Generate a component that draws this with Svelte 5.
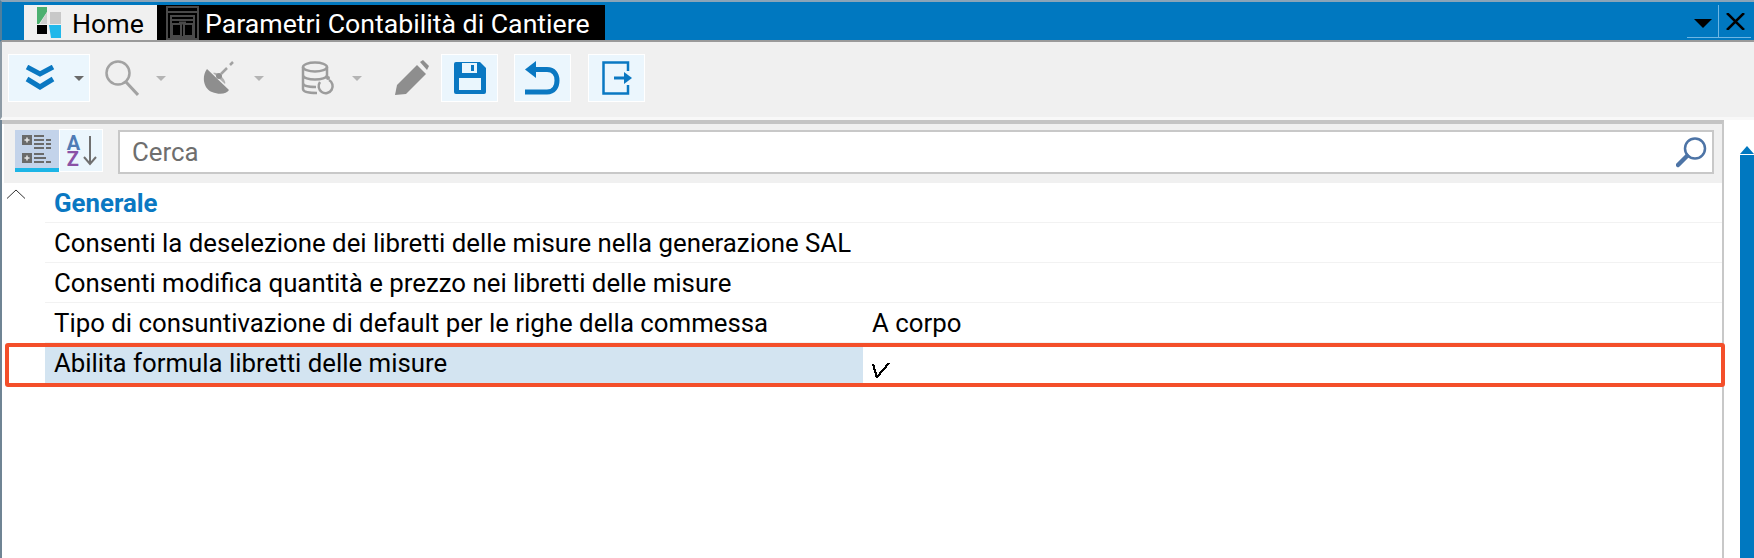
<script>
  const rows = [
    { label: 'Consenti la deselezione dei libretti delle misure nella generazione SAL', value: '' },
    { label: 'Consenti modifica quantità e prezzo nei libretti delle misure', value: '' },
    { label: 'Tipo di consuntivazione di default per le righe della commessa', value: 'A corpo' }
  ];
</script>

<div class="window">
  <header class="titlebar">
    <div class="tab home">
      <svg class="logo" width="24" height="31" viewBox="0 0 24 31">
        <path d="M0 0h10v5L2 17H0z" fill="#4cb070" />
        <path d="M10 5v12H3z" fill="#cfcfcf" />
        <rect x="13" y="5" width="11" height="12" fill="#c8c8c8" />
        <rect x="0" y="18" width="10" height="9" fill="#000" />
        <path d="M12 18h12v13H14z" fill="#22b8ea" />
      </svg>
      <span>Home</span>
    </div>
    <div class="tab active">
      <svg class="tabicon" width="33" height="34" viewBox="0 0 33 34" fill="none" stroke="#4a4a4a" stroke-width="2">
        <rect x="1" y="1" width="31" height="32" />
        <path d="M1 6h31" />
        <rect x="5" y="10" width="23" height="21" />
        <path d="M5 14h23" />
        <rect x="6" y="18" width="9" height="12" />
        <rect x="18" y="18" width="9" height="12" />
        <path d="M13 17h7" stroke-width="3" />
        <path d="M13 31h7" stroke-width="2" />
      </svg>
      <span>Parametri Contabilità di Cantiere</span>
    </div>
    <div class="winbtns">
      <div class="winbtn first"><span class="blacktri"></span></div>
      <div class="winbtn">
        <svg width="19" height="17" viewBox="0 0 19 17"><path d="M1 0l17 17M18 0L1 17" stroke="#000" stroke-width="2.500" /></svg>
      </div>
    </div>
  </header>

  <div class="toolbar">
    <button class="tool wide" aria-label="Espandi">
      <svg width="30" height="26" viewBox="0 0 30 26" fill="none" stroke="#0a78c2" stroke-width="5">
        <path d="M2 2l13 7 13-7M2 14l13 8 13-8" />
      </svg>
      <span class="tri dark"></span>
    </button>
    <div class="ghost g1">
      <svg width="34" height="36" viewBox="0 0 34 36" fill="none" stroke="#a2a2a2">
        <circle cx="13" cy="13" r="11.500" stroke-width="2.500" />
        <path d="M21 22l12 13" stroke-width="3" />
      </svg>
      <span class="tri"></span>
    </div>
    <div class="ghost g2">
      <svg width="34" height="34" viewBox="0 0 34 34" fill="none">
        <path d="M4 8c-6 8-3 20 5 23 7 3 15 2 17-2z" fill="#8e8e8e" />
        <path d="M10 12c2-1 5 0 8 3s5 6 4 8z" fill="#b0b0b0" />
        <circle cx="16" cy="15" r="3" fill="#8e8e8e" />
        <path d="M18 13l6-6M27 4l3-3" stroke="#a2a2a2" stroke-width="2.500" />
      </svg>
      <span class="tri"></span>
    </div>
    <div class="ghost g3">
      <svg width="35" height="34" viewBox="0 0 35 34" fill="none" stroke="#9c9c9c" stroke-width="2.500">
        <ellipse cx="14" cy="6" rx="12" ry="4.500" />
        <path d="M2 6v22c0 3 6 4 14 4M26 6v10M2 14c0 3 6 4.500 12 4.500s12-1.500 12-4.500M2 22c0 3 6 4 13 4" />
        <path d="M28 19a7 7 0 1 1-9 2" />
        <circle cx="27" cy="17" r="2" fill="#9c9c9c" stroke="none" />
      </svg>
      <span class="tri"></span>
    </div>
    <div class="ghost g4">
      <svg width="34" height="36" viewBox="0 0 34 36">
        <path d="M0 35l2-10L22 5l9 9-20 20z" fill="#8e8e8e" />
        <path d="M25 2l3-2 6 6-2 4z" fill="#8e8e8e" />
      </svg>
    </div>
    <button class="tool square s1" aria-label="Salva">
      <svg width="32" height="32" viewBox="0 0 32 32">
        <path d="M2 0h24l6 6v24a2 2 0 0 1-2 2H2a2 2 0 0 1-2-2V2a2 2 0 0 1 2-2z" fill="#0a78c2" />
        <rect x="8" y="1" width="15" height="10" fill="#eaf6fd" />
        <rect x="17" y="3" width="3" height="6" fill="#0a78c2" />
        <rect x="5" y="16" width="22" height="12" fill="#eaf6fd" />
      </svg>
    </button>
    <button class="tool square s2" aria-label="Annulla">
      <svg width="35" height="34" viewBox="0 0 35 34" fill="none">
        <path d="M11 0v17L0 8.500z" fill="#0a78c2" />
        <path d="M9 8.500h13c7 0 10 5 10 11s-3 11.500-10 11.500H0" stroke="#0a78c2" stroke-width="5" />
      </svg>
    </button>
    <button class="tool square s3" aria-label="Esci">
      <svg width="30" height="34" viewBox="0 0 30 34" fill="none" stroke="#0a78c2" stroke-width="2.500">
        <path d="M26 10V1.500H1.500v31H26V24" />
        <path d="M12 17h12" stroke-width="3" />
        <path d="M22 11v12l8-6z" fill="#0a78c2" stroke="none" />
      </svg>
    </button>
  </div>

  <div class="content">
    <div class="main">
      <div class="searchrow">
        <div class="viewbtn on">
          <svg width="30" height="30" viewBox="0 0 30 30">
            <g fill="#6a6a6a">
              <rect x="0" y="1" width="10" height="10" /><rect x="12" y="1" width="10" height="2" /><rect x="12" y="5" width="10" height="2" /><rect x="12" y="9" width="10" height="2" /><rect x="12" y="13" width="10" height="2" />
              <rect x="24" y="5" width="5" height="2" /><rect x="24" y="9" width="5" height="2" /><rect x="24" y="13" width="5" height="2" />
              <rect x="0" y="19" width="10" height="10" /><rect x="12" y="19" width="10" height="2" /><rect x="12" y="23" width="12" height="2" /><rect x="12" y="27" width="10" height="2" /><rect x="24" y="27" width="5" height="2" />
            </g>
            <path d="M2.500 6h5M5 3.500v5M2.500 24h5M5 21.500v5" stroke="#e6e6e6" stroke-width="1.500" />
          </svg>
        </div>
        <div class="viewbtn az">
          <div class="azl"><span class="a">A</span><span class="z">Z</span></div>
          <svg width="14" height="30" viewBox="0 0 14 30" fill="none" stroke="#707070" stroke-width="2"><path d="M7 0v28M1 21l6 7 6-7" /></svg>
        </div>
        <div class="search">
          <span>Cerca</span>
          <svg width="32" height="32" viewBox="0 0 32 32" fill="none" stroke="#4d74a6">
            <circle cx="19" cy="12.500" r="10" stroke-width="2.500" />
            <path d="M11 20L2 29" stroke-width="4.500" stroke-linecap="round" />
          </svg>
        </div>
      </div>

      <div class="grid">
        <div class="chev">
          <svg width="20" height="10" viewBox="0 0 20 10" fill="none" stroke="#333" stroke-width="1"><path d="M1 9.500l9-8.500 9 8.500" /></svg>
        </div>
        <div class="group">Generale</div>
        {#each rows as r}
          <div class="row">
            <div class="label">{r.label}</div>
            <div class="val">{r.value}</div>
          </div>
        {/each}
        <div class="row sel">
          <div class="label">Abilita formula libretti delle misure</div>
          <div class="val">
            <svg width="18" height="17" viewBox="0 0 18 17" fill="none" stroke="#000" stroke-width="2.200" shape-rendering="crispEdges"><path d="M1 2l4 14M5 15L17 1" /></svg>
          </div>
        </div>
      </div>
    </div>
    <div class="side"><div class="scroll"></div></div>
  </div>
  <div class="redbox"></div>
</div>

<style>
  :global(body) { margin: 0; background: #fff; }
  .window {
    position: relative;
    width: 1754px;
    height: 558px;
    overflow: hidden;
    background: #fff;
    font-family: Roboto, "Liberation Sans", sans-serif;
    color: #000;
    box-sizing: border-box;
  }
  .titlebar {
    height: 42px;
    box-sizing: border-box;
    background: #0078c0;
    border-top: 2px solid #8aa4b8;
    border-bottom: 2px solid #9a9a9a;
    border-left: 2px solid #4d7f9f;
    padding: 3px 0 0 22px;
    display: flex;
    align-items: stretch;
  }
  .tab { display: flex; align-items: center; font-size: 26.700px; height: 35px; box-sizing: border-box; white-space: nowrap; flex: none; }
  .tab span { padding-top: 3px; }
  .home { background: #f0f0f0; width: 133px; padding-left: 13px; gap: 11px; }
  .logo { flex: none; }
  .active { background: #000; color: #fff; width: 448px; padding-left: 9px; gap: 6px; }
  .tabicon { flex: none; }
  .winbtns { margin-left: auto; display: flex; height: 33px; margin-right: 3px; }
  .winbtn { width: 32px; display: flex; align-items: center; justify-content: center; border-bottom: 1px solid #6db6e4; box-sizing: border-box; }
  .winbtn.first { border-right: 1px solid #6db6e4; }
  .blacktri { width: 0; height: 0; border-left: 9px solid transparent; border-right: 9px solid transparent; border-top: 9px solid #000; margin-top: 4px; }
  .toolbar {
    height: 78px;
    box-sizing: border-box;
    background: #f0f0f0;
    border-left: 2px solid #8e9ba5;
    padding: 12px 0 0 6px;
    display: flex;
    align-items: flex-start;
    border-bottom: 3px solid #f8f8f8;
  }
  .tool { background: #ebf6fd; border: 1px solid #fff; padding: 0; display: flex; align-items: center; justify-content: center; box-sizing: border-box; height: 48px; }
  .wide { width: 82px; gap: 19px; justify-content: flex-start; padding-left: 16px; }
  .square { width: 57px; }
  .tri { width: 0; height: 0; border-left: 5px solid transparent; border-right: 5px solid transparent; border-top: 5px solid #b4b4b4; flex: none; }
  .tri.dark { border-top-color: #6a6a6a; }
  .ghost { display: flex; align-items: center; height: 48px; }
  .g1 { margin-left: 15px; gap: 17px; }
  .g2 { margin-left: 37px; gap: 17px; }
  .g3 { margin-left: 37px; gap: 16px; }
  .g4 { margin-left: 33px; }
  .s1 { margin-left: 12px; }
  .s2 { margin-left: 16px; }
  .s3 { margin-left: 17px; }
  .content { display: flex; height: 438px; border-left: 2px solid #6f8494; }
  .main { width: 1722px; flex: none; box-sizing: border-box; border-top: 4px solid #c4c4c4; border-right: 2px solid #c8c8c8; padding-left: 2px; }
  .searchrow { background: #f0f0f0; height: 59px; display: flex; align-items: flex-start; box-sizing: border-box; padding: 6px 0 0 11px; }
  .viewbtn { display: flex; align-items: center; justify-content: center; box-sizing: border-box; flex: none; }
  .on { width: 44px; height: 42px; background: #c3d3ea; border-bottom: 4px solid #1cb5e6; }
  .az { width: 44px; height: 43px; margin-top: -1px; background: #ebf6fd; border: 1px solid #fff; gap: 3px; padding-left: 2px; }
  .azl { display: flex; flex-direction: column; font: 700 20px/16px Roboto, sans-serif; }
  .a { color: #4f7bb5; }
  .z { color: #8a52a6; }
  .search {
    margin-left: 15px;
    width: 1596px;
    height: 44px;
    flex: none;
    box-sizing: border-box;
    background: #fff;
    border: 2px solid #c8c8c8;
    display: flex;
    align-items: center;
    justify-content: space-between;
    padding: 0 4px 0 12px;
    font-size: 25.800px;
    color: #6e6e6e;
  }
  .grid { position: relative; font-size: 25.800px; }
  .chev { position: absolute; left: 2px; top: 6px; line-height: 0; }
  .group { height: 39px; margin-left: 41px; padding-left: 9px; display: flex; align-items: center; color: #0a78c2; font-weight: 700; }
  .row { display: grid; grid-template-columns: 818px 1fr; height: 40px; margin-left: 41px; border-top: 1px solid #f2f2f2; box-sizing: border-box; }
  .row.sel { height: 41px; }
  .label { padding-left: 9px; display: flex; align-items: center; white-space: nowrap; }
  .val { padding-left: 9px; display: flex; align-items: center; }
  .sel .label { background: #d3e4f1; }
  .sel .val svg { margin: 14px 0 0 0; }
  .side { flex: 1; padding: 34px 0 0 16px; }
  .scroll { position: relative; height: 410px; border-top: 1px solid #fff; background: #0078c0; }
  .scroll::before { content: ""; position: absolute; top: -9px; left: 0; border-left: 7px solid transparent; border-right: 7px solid transparent; border-bottom: 8px solid #0078c0; }
  .redbox { position: absolute; left: 5px; top: 343px; width: 1720px; height: 44px; box-sizing: border-box; border: 4px solid #f44f2a; border-radius: 3px; pointer-events: none; }
</style>
